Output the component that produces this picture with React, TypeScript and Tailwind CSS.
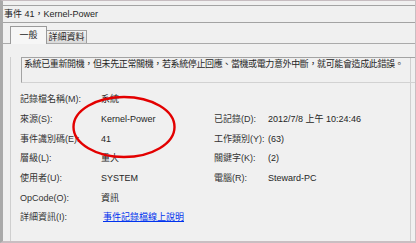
import React from "react";

const rows: [string, React.ReactNode, string?, string?][] = [
  ["記錄檔名稱(M):", "系統"],
  ["來源(S):", "Kernel-Power", "已記錄(D):", "2012/7/8 上午 10:24:46"],
  ["事件識別碼(E):", "41", "工作類別(Y):", "(63)"],
  ["層級(L):", "重大", "關鍵字(K):", "(2)"],
  ["使用者(U):", "SYSTEM", "電腦(R):", "Steward-PC"],
  ["OpCode(O):", "資訊"],
  [
    "詳細資訊(I):",
    <a className="ml-[2px] text-[#0033ee] underline underline-offset-[1px]">事件記錄檔線上說明</a>,
  ],
];

export default function App() {
  return (
    <div
      className="relative w-[416px] h-[243px] overflow-hidden bg-[#f0f0f0] border-t border-r border-b-2 border-l-[3px] border-t-[#c6bcc0] border-r-[#c9bec2] border-b-[#c9bec2] border-l-[#a9a9a9] text-[9px] leading-none text-[#252525]"
      style={{ fontFamily: '"Liberation Sans", "Noto Sans CJK TC", sans-serif' }}
    >
      <div className="h-[4px]" />

      {/* title bar */}
      <div className="h-[18px] border-y border-[#a3a3a3] flex items-center pl-[1px]">
        事件 41，Kernel-Power
      </div>

      {/* tabs */}
      <div className="h-[21px] border-b border-[#aaaaaa] flex items-end pl-[7px]">
        <div className="relative z-10 -mb-px w-[37px] h-[18px] border border-b-0 border-[#9a9a9a] bg-[#f6f6f6] flex items-center justify-center pb-[1px]">
          一般
        </div>
        <div className="w-[40px] h-[13px] border border-l-0 border-b-0 border-[#a0a0a0] bg-gradient-to-b from-[#f3f3f3] to-[#dadada] flex items-center justify-center">
          詳細資料
        </div>
      </div>

      {/* panel */}
      <div className="ml-[7px] mr-[4px] h-[196px] border-l border-r border-[#cfcfcf]">
        <div className="ml-[10px] mt-[13px] w-[420px] h-[26px] border-t border-l border-b border-t-[#a3a3a3] border-l-[#a3a3a3] border-b-[#d2d2d2] pl-[2px] pt-[2px] whitespace-nowrap tracking-[-0.38px]">
          系統已重新開機，但未先正常關機，若系統停止回應、當機或電力意外中斷，就可能會造成此錯誤。
        </div>

        <div className="mt-[7px] pl-[9px] grid grid-cols-[81px_113px_54px_1fr] auto-rows-[19.67px] items-center">
          {rows.map(([label, value, rLabel, rValue], i) => (
            <React.Fragment key={i}>
              <span className="text-[#333]">{label}</span>
              <span>{value}</span>
              <span className="text-[#333]">{rLabel ?? ""}</span>
              <span>{rValue ?? ""}</span>
            </React.Fragment>
          ))}
        </div>
      </div>

      {/* red annotation */}
      <svg className="absolute left-[68px] top-[94px]" width="106" height="64" viewBox="0 0 106 64">
        <ellipse cx="53" cy="32" rx="50.5" ry="30" fill="none" stroke="#e30000" strokeWidth="2.4" />
      </svg>
    </div>
  );
}
